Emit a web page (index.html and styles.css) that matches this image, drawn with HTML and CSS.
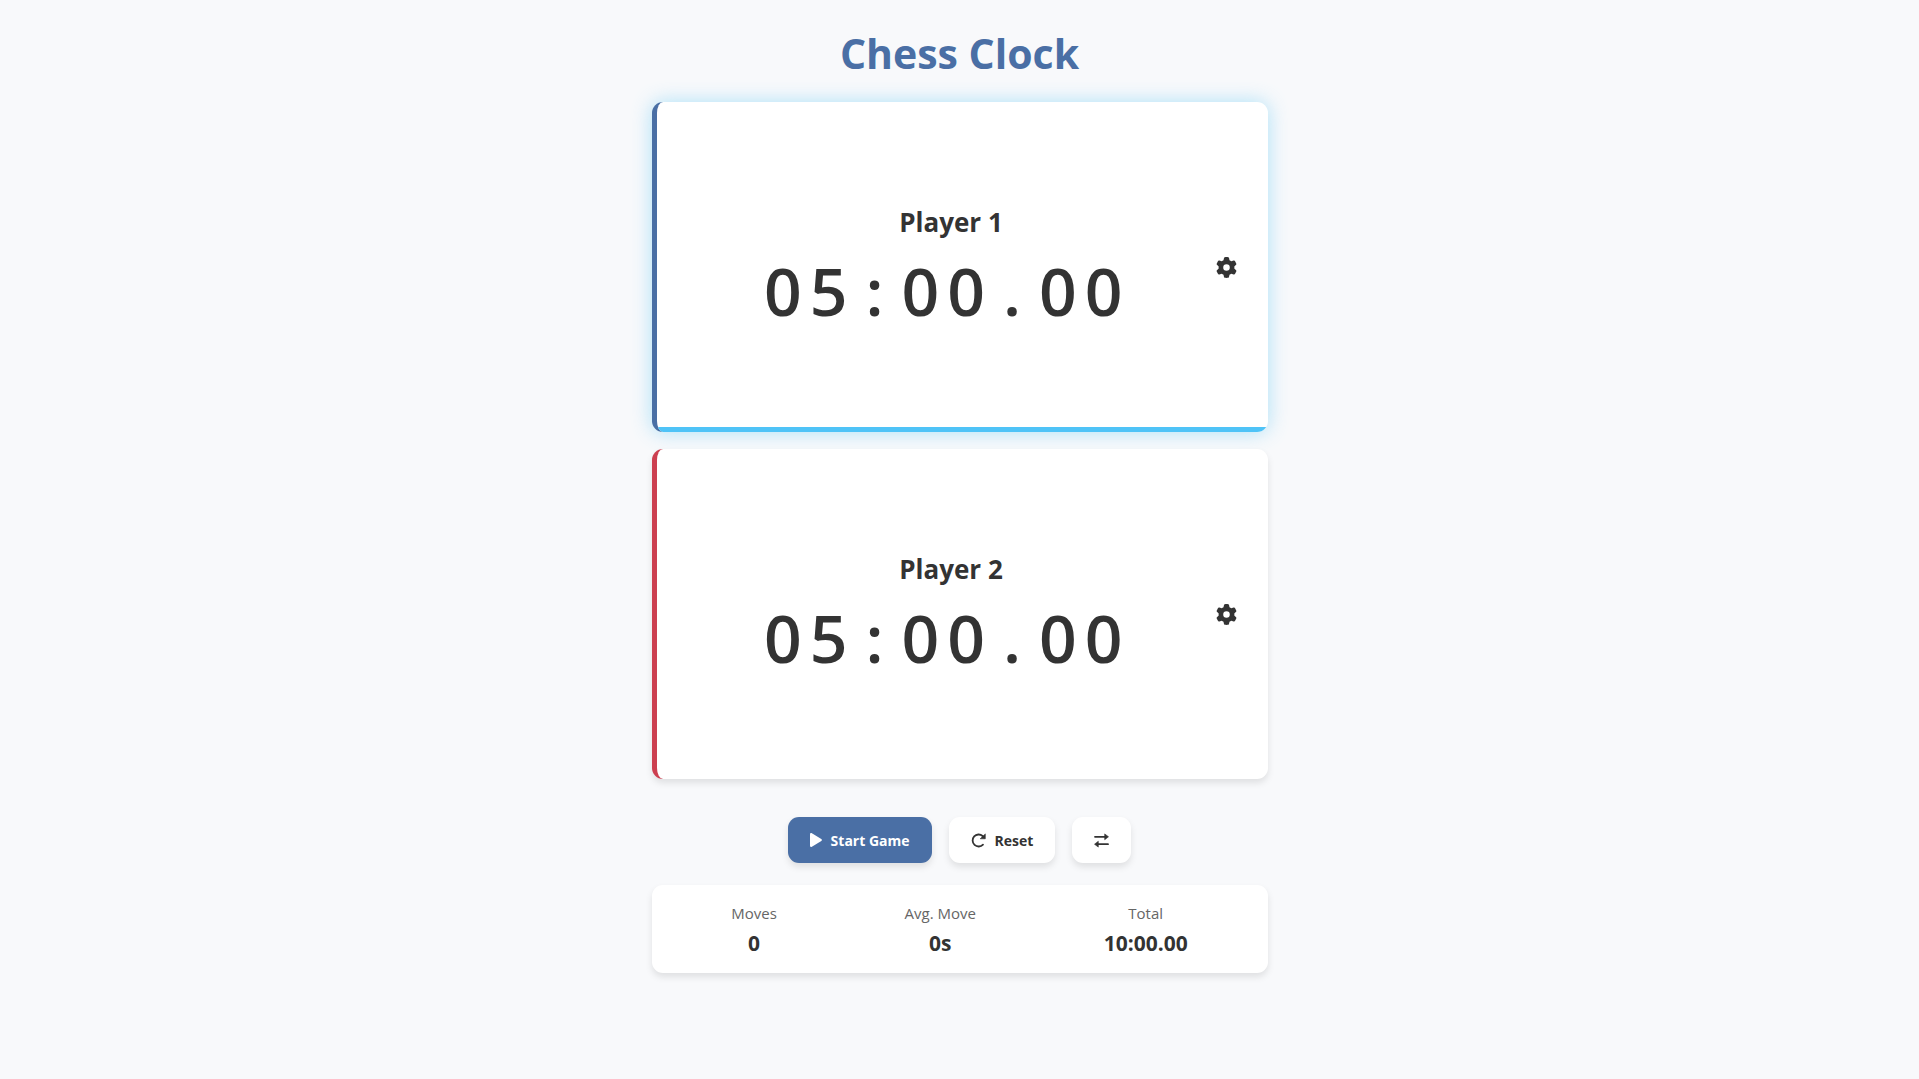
FILE: index.html
```html
<!DOCTYPE html>
<html lang="en">
<head>
<meta charset="utf-8">
<meta name="viewport" content="width=device-width, initial-scale=1">
<title>Chess Clock</title>
<link rel="stylesheet" href="styles.css">
</head>
<body>
<main class="app">
  <h1 class="title">Chess Clock</h1>

  <div class="clocks">
    <section class="clock clock-one active">
      <div class="clock-info">
        <h2 class="player">Player 1</h2>
        <div class="time"><span>0</span><span>5</span><span>:</span><span>0</span><span>0</span><span>.</span><span>0</span><span>0</span></div>
      </div>
      <button class="settings" type="button" aria-label="Player 1 settings">
        <svg class="gear" viewBox="0 0 512 512" aria-hidden="true"><path d="M495.9 166.6c3.200 8.700.5 18.400-6.400 24.600l-43.300 39.400c1.100 8.300 1.700 16.800 1.700 25.400s-.6 17.100-1.700 25.400l43.300 39.400c6.900 6.200 9.600 15.900 6.400 24.600-4.400 11.900-9.700 23.300-15.800 34.300l-4.700 8.100c-6.600 11-14 21.400-22.100 31.200-5.900 7.200-15.700 9.600-24.500 6.800l-55.700-17.700c-13.400 10.300-28.200 18.900-44 25.400l-12.500 57.100c-2 9.100-9 16.300-18.200 17.800-13.800 2.300-28 3.500-42.500 3.500s-28.700-1.200-42.500-3.500c-9.200-1.500-16.200-8.700-18.200-17.800l-12.500-57.100c-15.800-6.500-30.600-15.100-44-25.400l-55.600 17.800c-8.800 2.800-18.600.3-24.500-6.800-8.100-9.800-15.500-20.200-22.100-31.200l-4.700-8.100c-6.100-11-11.400-22.400-15.800-34.300-3.200-8.700-.5-18.400 6.400-24.600l43.300-39.400c-1.100-8.400-1.700-16.900-1.700-25.500s.6-17.100 1.700-25.400l-43.300-39.400c-6.900-6.200-9.600-15.900-6.400-24.600 4.400-11.900 9.700-23.300 15.800-34.300l4.700-8.100c6.600-11 14-21.400 22.100-31.200 5.900-7.200 15.700-9.600 24.500-6.800l55.700 17.700c13.400-10.300 28.200-18.900 44-25.400l12.500-57.100c2-9.100 9-16.300 18.200-17.800C227.300 1.200 241.500 0 256 0s28.700 1.200 42.500 3.500c9.200 1.500 16.200 8.700 18.200 17.800l12.500 57.100c15.800 6.500 30.600 15.100 44 25.400l55.700-17.700c8.800-2.800 18.600-.3 24.500 6.800 8.100 9.800 15.500 20.200 22.100 31.200l4.700 8.100c6.100 11 11.400 22.400 15.800 34.300zM256 336a80 80 0 1 0 0-160 80 80 0 1 0 0 160z"/></svg>
      </button>
    </section>

    <section class="clock clock-two">
      <div class="clock-info">
        <h2 class="player">Player 2</h2>
        <div class="time"><span>0</span><span>5</span><span>:</span><span>0</span><span>0</span><span>.</span><span>0</span><span>0</span></div>
      </div>
      <button class="settings" type="button" aria-label="Player 2 settings">
        <svg class="gear" viewBox="0 0 512 512" aria-hidden="true"><path d="M495.9 166.6c3.200 8.700.5 18.400-6.400 24.600l-43.300 39.400c1.100 8.300 1.700 16.800 1.700 25.400s-.6 17.100-1.700 25.400l43.300 39.400c6.900 6.200 9.600 15.900 6.400 24.600-4.400 11.900-9.700 23.300-15.800 34.300l-4.700 8.100c-6.600 11-14 21.400-22.100 31.200-5.900 7.200-15.700 9.600-24.500 6.800l-55.700-17.700c-13.400 10.300-28.200 18.900-44 25.400l-12.500 57.100c-2 9.100-9 16.300-18.200 17.800-13.800 2.300-28 3.500-42.500 3.500s-28.700-1.200-42.500-3.500c-9.200-1.500-16.200-8.700-18.200-17.800l-12.500-57.100c-15.800-6.500-30.600-15.100-44-25.400l-55.600 17.800c-8.800 2.800-18.600.3-24.500-6.800-8.100-9.800-15.500-20.200-22.100-31.200l-4.700-8.100c-6.100-11-11.400-22.400-15.800-34.300-3.200-8.700-.5-18.400 6.400-24.600l43.300-39.400c-1.100-8.400-1.700-16.900-1.700-25.500s.6-17.100 1.700-25.400l-43.300-39.400c-6.900-6.200-9.600-15.900-6.400-24.600 4.400-11.900 9.700-23.300 15.800-34.300l4.700-8.100c6.600-11 14-21.400 22.100-31.200 5.900-7.200 15.700-9.600 24.500-6.800l55.700 17.700c13.400-10.300 28.200-18.900 44-25.400l12.500-57.100c2-9.100 9-16.300 18.200-17.800C227.300 1.200 241.500 0 256 0s28.700 1.200 42.500 3.500c9.200 1.500 16.200 8.700 18.200 17.800l12.500 57.100c15.800 6.500 30.600 15.100 44 25.400l55.700-17.700c8.800-2.800 18.600-.3 24.500 6.800 8.100 9.800 15.500 20.200 22.100 31.200l4.700 8.100c6.100 11 11.400 22.400 15.800 34.300zM256 336a80 80 0 1 0 0-160 80 80 0 1 0 0 160z"/></svg>
      </button>
    </section>
  </div>

  <div class="controls">
    <button class="btn btn-primary" type="button">
      <svg class="icon icon-play" viewBox="0 0 12 14" aria-hidden="true"><path d="M0 1.200C0 .2 1 -.3 1.900.2l9.400 5.800c.8.500.8 1.500 0 2L1.900 13.800C1 14.300 0 13.800 0 12.800z"/></svg>
      Start Game
    </button>
    <button class="btn" type="button">
      <svg class="icon" viewBox="0 0 15 15" aria-hidden="true"><path d="M12 11.600A6 6 0 1 1 11.600 3L13 4.500" fill="none" stroke="currentColor" stroke-width="1.800" stroke-linecap="round"/><path d="M14.300.900v4.900H9.200z" stroke="currentColor" stroke-width=".6" stroke-linejoin="round"/></svg>
      Reset
    </button>
    <button class="btn" type="button" aria-label="Switch sides">
      <svg class="icon" viewBox="0 0 15 15" aria-hidden="true"><path d="M1 3.800h10M4 11.200h10" fill="none" stroke="currentColor" stroke-width="1.800" stroke-linecap="round"/><path d="M10.700.900v5.800l3.800-2.900zM4.300 8.300v5.800L.5 11.200z" stroke="currentColor" stroke-width=".6" stroke-linejoin="round"/></svg>
    </button>
  </div>

  <dl class="stats">
    <div class="stat"><dt>Moves</dt><dd>0</dd></div>
    <div class="stat"><dt>Avg. Move</dt><dd>0s</dd></div>
    <div class="stat"><dt>Total</dt><dd>10:00.00</dd></div>
  </dl>
</main>
</body>
</html>
```
FILE: styles.css
```css
:root {
  --primary: #4a6fa5;
  --second: #cc3f50;
  --active: #4fc3f7;
  --text: #333;
  --shadow: 0 4px 7px rgba(0, 0, 0, .1);
}

* { box-sizing: border-box; }

body {
  margin: 0;
  min-height: 100vh;
  background: #f8f9fb;
  color: var(--text);
  font-family: "Segoe UI", "Open Sans", "Noto Sans", sans-serif;
}

button { font: inherit; color: inherit; border: 0; cursor: pointer; }

.app {
  max-width: 652px;
  margin: 0 auto;
  padding: 22px 18px;
}

.title {
  margin: 0 0 18px;
  color: var(--primary);
  font-size: 41px;
  line-height: 62px;
  font-weight: 700;
  text-align: center;
}

.clocks { display: grid; gap: 17px; }

.clock {
  position: relative;
  display: grid;
  grid-template-columns: 1fr auto 1fr;
  align-items: center;
  min-height: 330px;
  padding-right: 22px;
  overflow: hidden;
  background: #fff;
  border-left: 5px solid var(--second);
  border-radius: 11px;
  box-shadow: var(--shadow);
}

.clock-one { border-left-color: var(--primary); }

.active { box-shadow: 0 0 20px rgba(79, 195, 247, .45); }

/* Bar along the bottom edge of the clock that is running */
.active::after {
  content: "";
  position: absolute;
  left: 0;
  right: 0;
  bottom: 0;
  height: 5px;
  background: var(--active);
}

.clock-info { grid-column: 2; width: 382px; }

.player {
  margin: 0 0 10px;
  font-size: 26px;
  line-height: 36px;
  font-weight: 700;
  text-align: center;
}

.time {
  display: grid;
  grid-template-columns: repeat(8, 12%);
  font-size: 66px;
  line-height: 80px;
  font-weight: 600;
  text-align: center;
}

.settings {
  justify-self: end;
  display: flex;
  padding: 9px;
  background: none;
}

.gear { width: 21px; height: 21px; fill: currentColor; }

.controls {
  display: flex;
  justify-content: center;
  gap: 17px;
  margin: 38px 0 22px;
}

.btn {
  display: flex;
  align-items: center;
  gap: 9px;
  height: 46px;
  padding: 0 22px;
  background: #fff;
  border-radius: 11px;
  box-shadow: var(--shadow);
  font-size: 14px;
  font-weight: 700;
}

.btn-primary { background: var(--primary); color: #fff; }

.icon { width: 15px; height: 15px; fill: currentColor; }

.icon-play { width: 12px; height: 14px; }

.stats {
  display: flex;
  justify-content: space-around;
  margin: 0;
  padding: 16px;
  background: #fff;
  border-radius: 11px;
  box-shadow: var(--shadow);
  text-align: center;
}

.stat dt { color: #666; font-size: 15px; line-height: 24px; }

.stat dd { margin: 4px 0 0; font-size: 21px; line-height: 28px; font-weight: 700; }
```
